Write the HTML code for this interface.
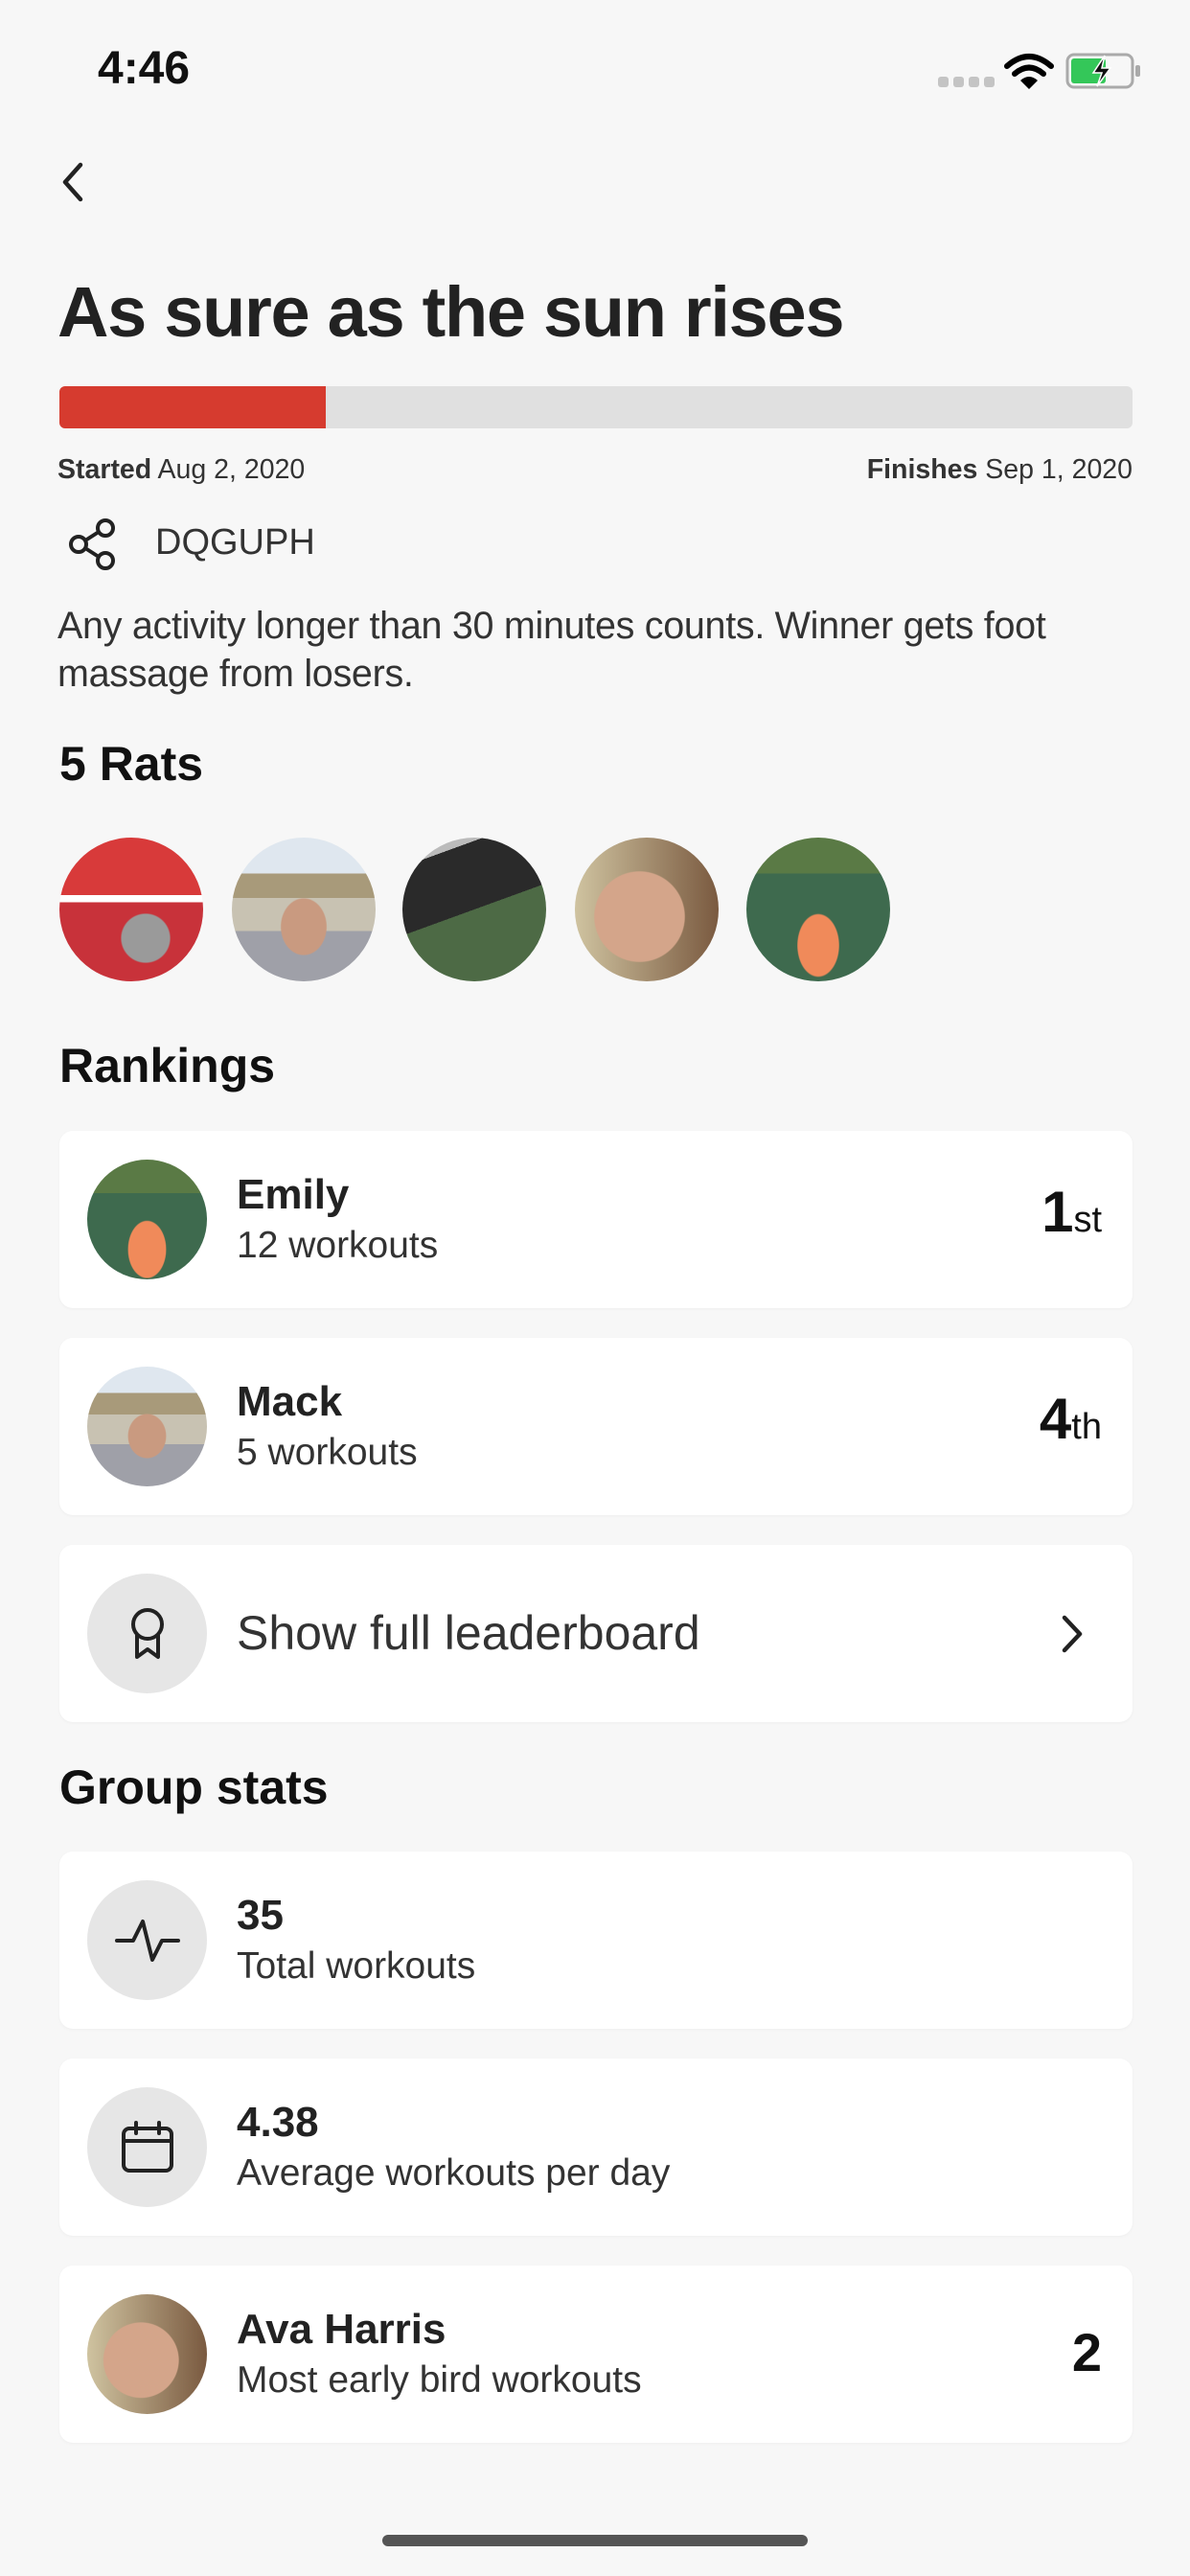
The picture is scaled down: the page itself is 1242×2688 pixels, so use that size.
<!DOCTYPE html>
<html><head><meta charset="utf-8"><style>
*{margin:0;padding:0;box-sizing:border-box}
body{width:1242px;height:2688px;background:#f7f7f7;font-family:"Liberation Sans",sans-serif;color:#1c1c1c;position:relative;overflow:hidden}
.a{position:absolute;white-space:nowrap}
.card{position:absolute;left:62px;width:1120px;height:185px;background:#fff;border-radius:14px;box-shadow:0 1px 3px rgba(0,0,0,0.04)}
.av{position:absolute;left:29px;top:30px;width:125px;height:125px;border-radius:50%;overflow:hidden}
.ic{background:#e6e6e6;display:flex;align-items:center;justify-content:center}
.nm{position:absolute;left:185px;top:42px;font-size:44px;font-weight:bold;color:#222}
.sb{position:absolute;left:185px;top:98px;font-size:39px;color:#333}
.big{position:absolute;left:185px;top:0;line-height:185px;font-size:50px;color:#333}
.rk{position:absolute;right:32px;top:50px;font-weight:bold;font-size:60px;color:#111}
.rk span{font-weight:normal;font-size:38px}
.ph{position:absolute;top:874px;width:150px;height:150px;border-radius:50%;overflow:hidden}
h2{position:absolute;left:62px;font-size:50px;font-weight:bold;color:#111}
</style></head><body>
<div class="a" style="left:102px;top:44px;font-size:48px;font-weight:bold;color:#111">4:46</div>
<div class="a" style="left:979px;top:80px;display:flex;gap:5px"><i style="width:11px;height:11px;border-radius:3px;background:#c4c4c4"></i><i style="width:11px;height:11px;border-radius:3px;background:#c4c4c4"></i><i style="width:11px;height:11px;border-radius:3px;background:#c4c4c4"></i><i style="width:11px;height:11px;border-radius:3px;background:#c4c4c4"></i></div>
<svg class="a" style="left:1048px;top:55px" width="52" height="40" viewBox="0 0 52 40"><path d="M3 14 Q26 -6 49 14" stroke="#000" stroke-width="6" fill="none" stroke-linecap="round"/><path d="M11 22 Q26 9 41 22" stroke="#000" stroke-width="6" fill="none" stroke-linecap="round"/><path d="M17 29 Q26 21 35 29 L26 38 Z" fill="#000"/></svg>
<svg class="a" style="left:1112px;top:55px" width="80" height="38" viewBox="0 0 80 38"><rect x="2" y="2" width="68" height="34" rx="7" fill="none" stroke="#aaa" stroke-width="3"/><rect x="6" y="6" width="36" height="26" rx="3" fill="#34c759"/><rect x="73" y="13" width="5" height="12" rx="2" fill="#aaa"/><path d="M41 3 L29 21 L38 21 L33 35 L47 16 L38 16 Z" fill="#111" stroke="#fff" stroke-width="1.5"/></svg>
<svg class="a" style="left:60px;top:168px" width="32" height="44" viewBox="0 0 32 44"><path d="M24 4 L8 22 L24 40" stroke="#222" stroke-width="4.5" fill="none" stroke-linecap="round" stroke-linejoin="round"/></svg>
<div class="a" style="left:60px;top:283px;font-size:74px;font-weight:bold;color:#222;letter-spacing:-1.3px">As sure as the sun rises</div>
<div class="a" style="left:62px;top:403px;width:1120px;height:44px;background:#e0e0e0;border-radius:6px"></div>
<div class="a" style="left:62px;top:403px;width:278px;height:44px;background:#d63b2f;border-radius:6px 0 0 6px"></div>
<div class="a" style="left:60px;top:474px;font-size:28.5px;color:#333"><b>Started</b> Aug 2, 2020</div>
<div class="a" style="right:60px;top:474px;font-size:28.5px;color:#333"><b>Finishes</b> Sep 1, 2020</div>
<svg class="a" style="left:70px;top:540px" width="52" height="56" viewBox="0 0 52 56"><circle cx="40" cy="11" r="8" fill="none" stroke="#222" stroke-width="4"/><circle cx="12" cy="28" r="8" fill="none" stroke="#222" stroke-width="4"/><circle cx="40" cy="45" r="8" fill="none" stroke="#222" stroke-width="4"/><path d="M19 24 L33 15 M19 32 L33 41" stroke="#222" stroke-width="4"/></svg>
<div class="a" style="left:162px;top:545px;font-size:38px;color:#333">DQGUPH</div>
<div class="a" style="left:60px;top:628px;font-size:39.5px;line-height:50px;color:#333;letter-spacing:-0.3px">Any activity longer than 30 minutes counts. Winner gets foot<br>massage from losers.</div>
<h2 style="top:768px">5 Rats</h2>
<div class="ph" style="left:62px;background:radial-gradient(circle at 60% 70%,#9a9a9a 0 18%,transparent 19%),linear-gradient(#d83a3a 0 40%,#fff 40% 45%,#c8323a 45%)"></div>
<div class="ph" style="left:242px;background:radial-gradient(ellipse at 50% 62%,#c99a80 0 22%,transparent 23%),linear-gradient(#dfe7ef 0 25%,#a89a7a 25% 42%,#c8c2b2 42% 65%,#9fa0a8 65%)"></div>
<div class="ph" style="left:420px;background:linear-gradient(160deg,#bbb 0 15%,#2a2a2a 15% 50%,#4d6a45 50%)"></div>
<div class="ph" style="left:600px;background:radial-gradient(ellipse at 45% 55%,#d4a58a 0 40%,transparent 41%),linear-gradient(90deg,#cfc3a0,#7a5a40)"></div>
<div class="ph" style="left:779px;background:radial-gradient(ellipse at 50% 75%,#f08a5a 0 20%,transparent 21%),linear-gradient(#5a7a45 0 25%,#3e6a4e 25%)"></div>
<h2 style="top:1083px">Rankings</h2>
<div class="card" style="top:1180px"><div class="av" style="background:radial-gradient(ellipse at 50% 75%,#f08a5a 0 22%,transparent 23%),linear-gradient(#5a7a45 0 28%,#3e6a4e 28%)"></div><div class="nm">Emily</div><div class="sb">12 workouts</div><div class="rk">1<span>st</span></div></div>
<div class="card" style="top:1396px"><div class="av" style="background:radial-gradient(ellipse at 50% 58%,#c99a80 0 22%,transparent 23%),linear-gradient(#dfe7ef 0 22%,#a89a7a 22% 40%,#c8c2b2 40% 65%,#9fa0a8 65%)"></div><div class="nm">Mack</div><div class="sb">5 workouts</div><div class="rk">4<span>th</span></div></div>
<div class="card" style="top:1612px"><div class="av ic"><svg width="50" height="64" viewBox="0 0 50 64"><circle cx="25" cy="22" r="15" fill="none" stroke="#222" stroke-width="4"/><path d="M14 33 L14 56 L25 48 L36 56 L36 33" fill="none" stroke="#222" stroke-width="4" stroke-linejoin="round"/></svg></div><div class="big">Show full leaderboard</div><svg style="position:absolute;right:50px;top:72px" width="26" height="42" viewBox="0 0 26 42"><path d="M5 4 L21 21 L5 38" stroke="#222" stroke-width="4.5" fill="none" stroke-linecap="round" stroke-linejoin="round"/></svg></div>
<h2 style="top:1836px">Group stats</h2>
<div class="card" style="top:1932px"><div class="av ic"><svg width="70" height="50" viewBox="0 0 70 50"><path d="M3 25 L20 25 L30 5 L40 45 L50 25 L67 25" fill="none" stroke="#222" stroke-width="4" stroke-linejoin="round" stroke-linecap="round"/></svg></div><div class="nm">35</div><div class="sb">Total workouts</div></div>
<div class="card" style="top:2148px"><div class="av ic"><svg width="58" height="58" viewBox="0 0 58 58"><rect x="4" y="9" width="50" height="44" rx="6" fill="none" stroke="#222" stroke-width="4"/><path d="M4 22 L54 22 M17 3 L17 14 M41 3 L41 14" stroke="#222" stroke-width="4" stroke-linecap="round"/></svg></div><div class="nm">4.38</div><div class="sb">Average workouts per day</div></div>
<div class="card" style="top:2364px"><div class="av" style="background:radial-gradient(ellipse at 45% 55%,#d4a58a 0 40%,transparent 41%),linear-gradient(90deg,#cfc3a0,#7a5a40)"></div><div class="nm">Ava Harris</div><div class="sb">Most early bird workouts</div><div class="rk" style="font-size:56px;top:58px">2</div></div>
<div class="a" style="left:399px;top:2645px;width:444px;height:12px;border-radius:6px;background:#555"></div>
</body></html>
